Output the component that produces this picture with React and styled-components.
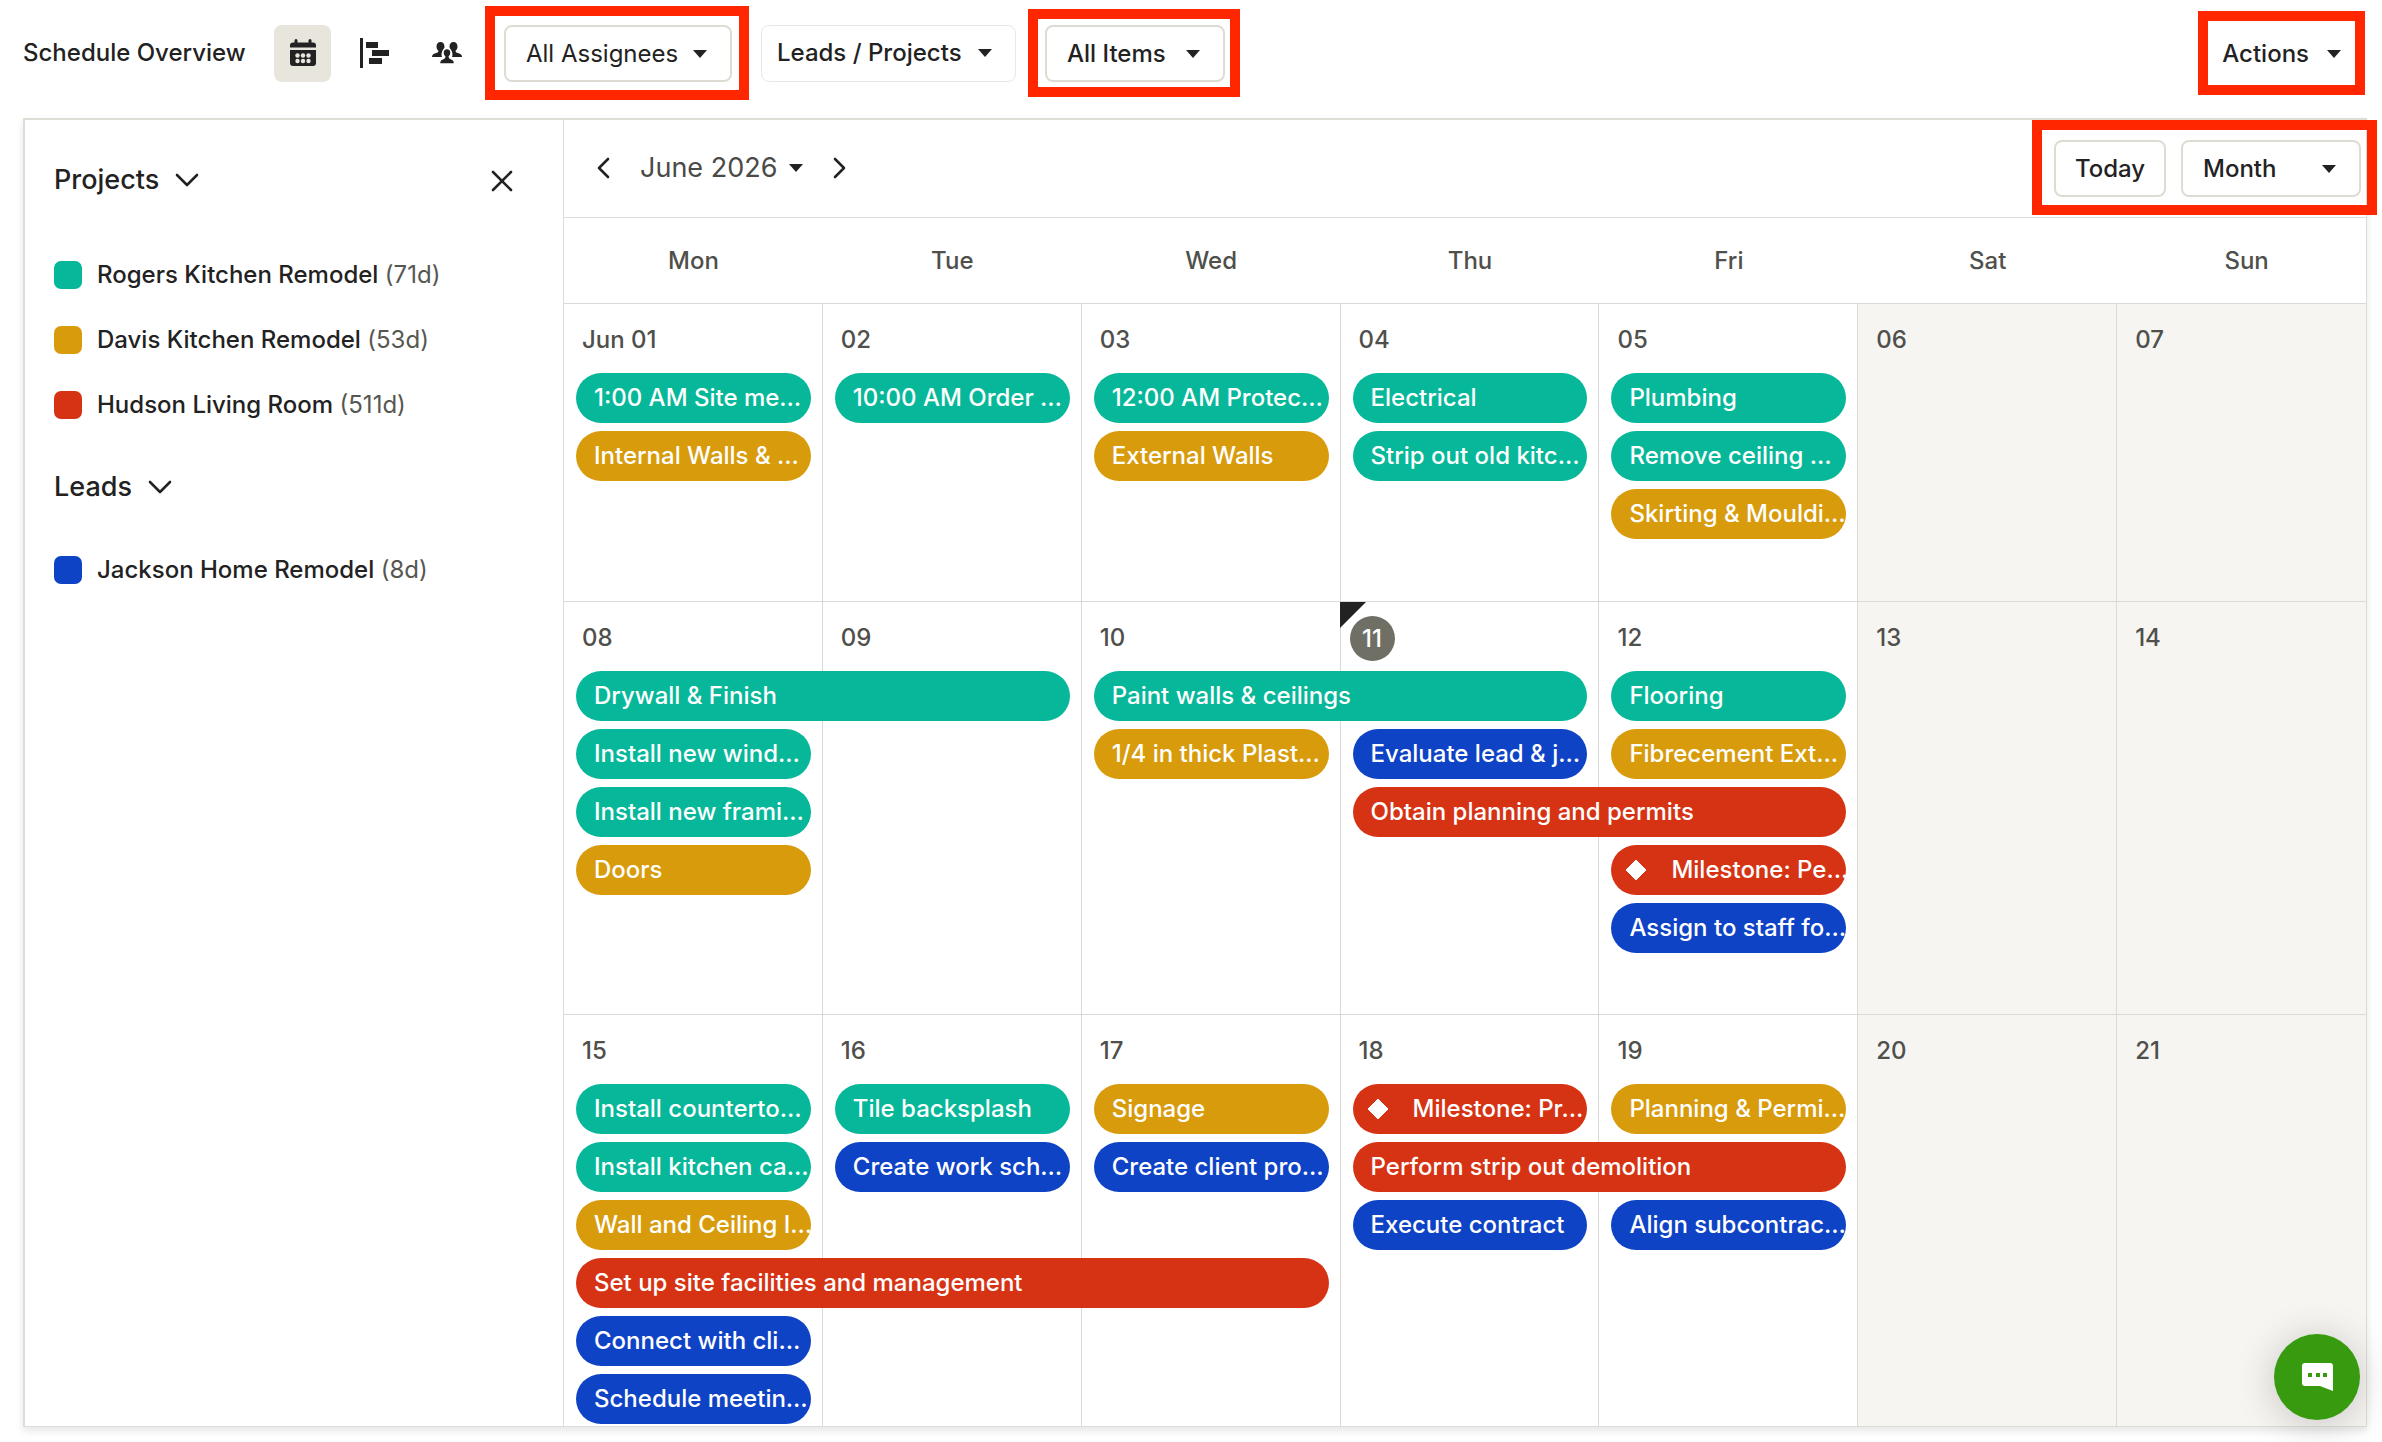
import React from "react";
import styled, { createGlobalStyle } from "styled-components";

const colors = {
  green: "#06b899",
  gold: "#d89b0c",
  red: "#d63315",
  blue: "#0f43c6",
};

const projects = [
  { name: "Rogers Kitchen Remodel", days: "71d", color: "green" },
  { name: "Davis Kitchen Remodel", days: "53d", color: "gold" },
  { name: "Hudson Living Room", days: "511d", color: "red" },
];

const leads = [{ name: "Jackson Home Remodel", days: "8d", color: "blue" }];

const weekDays = ["Mon", "Tue", "Wed", "Thu", "Fri", "Sat", "Sun"];

// each item: [title, color, first column, line, columns covered, milestone]
const weeks = [
  {
    height: 298,
    days: ["Jun 01", "02", "03", "04", "05", "06", "07"],
    items: [
      ["1:00 AM Site me…", "green", 1, 1],
      ["10:00 AM Order …", "green", 2, 1],
      ["12:00 AM Protec…", "green", 3, 1],
      ["Electrical", "green", 4, 1],
      ["Plumbing", "green", 5, 1],
      ["Internal Walls & …", "gold", 1, 2],
      ["External Walls", "gold", 3, 2],
      ["Strip out old kitc…", "green", 4, 2],
      ["Remove ceiling …", "green", 5, 2],
      ["Skirting & Mouldi…", "gold", 5, 3],
    ],
  },
  {
    height: 413,
    days: ["08", "09", "10", "11", "12", "13", "14"],
    today: "11",
    items: [
      ["Drywall & Finish", "green", 1, 1, 2],
      ["Paint walls & ceilings", "green", 3, 1, 2],
      ["Flooring", "green", 5, 1],
      ["Install new wind…", "green", 1, 2],
      ["1/4 in thick Plast…", "gold", 3, 2],
      ["Evaluate lead & j…", "blue", 4, 2],
      ["Fibrecement Ext…", "gold", 5, 2],
      ["Install new frami…", "green", 1, 3],
      ["Obtain planning and permits", "red", 4, 3, 2],
      ["Doors", "gold", 1, 4],
      ["Milestone: Pe…", "red", 5, 4, 1, true],
      ["Assign to staff fo…", "blue", 5, 5],
    ],
  },
  {
    height: 411,
    days: ["15", "16", "17", "18", "19", "20", "21"],
    items: [
      ["Install counterto…", "green", 1, 1],
      ["Tile backsplash", "green", 2, 1],
      ["Signage", "gold", 3, 1],
      ["Milestone: Pr…", "red", 4, 1, 1, true],
      ["Planning & Permi…", "gold", 5, 1],
      ["Install kitchen ca…", "green", 1, 2],
      ["Create work sch…", "blue", 2, 2],
      ["Create client pro…", "blue", 3, 2],
      ["Perform strip out demolition", "red", 4, 2, 2],
      ["Wall and Ceiling I…", "gold", 1, 3],
      ["Execute contract", "blue", 4, 3],
      ["Align subcontrac…", "blue", 5, 3],
      ["Set up site facilities and management", "red", 1, 4, 3],
      ["Connect with cli…", "blue", 1, 5],
      ["Schedule meetin…", "blue", 1, 6],
    ],
  },
];

function Caret() {
  return (
    <CaretSvg viewBox="0 0 14 8" aria-hidden="true">
      <path d="M0 0h14L7 8z" fill="currentColor" />
    </CaretSvg>
  );
}

function Chevron({ d, width, height }) {
  return (
    <svg width={width} height={height} viewBox={`0 0 ${width} ${height}`} fill="none" aria-hidden="true">
      <path d={d} stroke="currentColor" strokeWidth="2.6" strokeLinecap="round" strokeLinejoin="round" />
    </svg>
  );
}

function CalendarIcon() {
  return (
    <svg width="26" height="28" viewBox="0 0 26 28" aria-hidden="true">
      <path
        d="M4.500 1.500a1.500 1.500 0 0 1 3 0V3.500h11V1.500a1.500 1.500 0 0 1 3 0V3.500H23a3 3 0 0 1 3 3V8.500H0V6.500a3 3 0 0 1 3-3h1.500z"
        fill="#222"
      />
      <path d="M0 11h26V24a3 3 0 0 1-3 3H3a3 3 0 0 1-3-3z" fill="#222" />
      <g fill="#e8e6dc">
        {[7.5, 13, 18.5].map((x) => (
          <React.Fragment key={x}>
            <circle cx={x} cy="16.500" r="2.200" />
            <circle cx={x} cy="22" r="2.200" />
          </React.Fragment>
        ))}
      </g>
    </svg>
  );
}

function GanttIcon() {
  return (
    <svg width="30" height="30" viewBox="0 0 30 30" fill="#222" aria-hidden="true">
      <path d="M0 0h3v30H0zM6 4h12v6H6zM12 12h17v6H12zM9 20h13v6H9z" />
    </svg>
  );
}

function PeopleIcon() {
  return (
    <svg width="30" height="22" viewBox="0 0 30 22" fill="#222" aria-hidden="true">
      <path d="M8.500 0C11 0 12.500 2 12.500 4.500c0 1.800-.7 3.300-1.700 4.200-1.500 1.500-1.500 4.500-.8 6.300H0c0-2.500 1.500-3.200 3.500-3.800 2.500-.7 3-1.200 3-2.400C5.200 8 4.500 6.300 4.500 4.500 4.500 2 6 0 8.500 0z" />
      <path d="M21.500 0C19 0 17.500 2 17.500 4.500c0 1.800.7 3.300 1.700 4.200 1.500 1.500 1.500 4.500.8 6.300h10c0-2.500-1.500-3.200-3.500-3.800-2.500-.7-3-1.200-3-2.400 1.300-.8 2-2.500 2-4.300C25.500 2 24 0 21.500 0z" />
      <path
        d="M15 6.500c2.500 0 4 1.800 4 4.200 0 1.700-.7 3.100-1.800 4 0 1.300.5 1.800 2.600 2.500 2 .6 2.700 1.800 2.700 4.800h-15c0-3 .7-4.200 2.700-4.800 2.100-.7 2.600-1.200 2.600-2.500-1.100-.9-1.800-2.300-1.800-4 0-2.400 1.500-4.200 4-4.200z"
        stroke="#fff"
        strokeWidth="1.400"
      />
    </svg>
  );
}

function ChatIcon() {
  return (
    <svg width="31" height="28" viewBox="0 0 31 28" aria-hidden="true">
      <path d="M3 0h25a3 3 0 0 1 3 3v25l-13-5H3a3 3 0 0 1-3-3V3a3 3 0 0 1 3-3z" fill="#fff" />
      <path d="M6 10h4v4H6zM14 10h4v4h-4zM21 10h4v4h-4z" fill="#389b0f" />
    </svg>
  );
}

function Select({ label, value, width, thin, faint, inset }) {
  return (
    <SelectBox $width={width} $faint={faint}>
      <SelectInput aria-label={label} defaultValue={value} $thin={thin} $inset={inset}>
        <option value={value}>{value}</option>
      </SelectInput>
      <Caret />
    </SelectBox>
  );
}

function JobList({ title, jobs }) {
  return (
    <section>
      <GroupButton type="button">
        {title}
        <Chevron d="M2 2l10 10L22 2" width={24} height={14} />
      </GroupButton>
      <Jobs>
        {jobs.map((job) => (
          <Job key={job.name}>
            <Swatch $color={colors[job.color]} />
            <span>
              {job.name} <Count>({job.days})</Count>
            </span>
          </Job>
        ))}
      </Jobs>
    </section>
  );
}

function WeekRow({ week }) {
  return (
    <Week $height={week.height}>
      <Days>
        {week.days.map((day, i) => (
          <Day key={day} $off={i > 4}>
            {day === week.today ? (
              <>
                <Corner />
                <Today>{day}</Today>
              </>
            ) : (
              <DayNumber>{day}</DayNumber>
            )}
          </Day>
        ))}
      </Days>
      <Items>
        {week.items.map(([title, color, col, line, span = 1, milestone]) => (
          <Item key={title} type="button" $color={colors[color]} $col={col} $line={line} $span={span} $milestone={milestone}>
            {milestone && (
              <svg width="22" height="22" viewBox="0 0 22 22" aria-hidden="true">
                <path d="M11 1l10 10-10 10L1 11z" fill="#fff" stroke="#fff" strokeLinejoin="round" />
              </svg>
            )}
            <ItemText>{title}</ItemText>
          </Item>
        ))}
      </Items>
    </Week>
  );
}

export default function App() {
  return (
    <>
      <GlobalStyle />
      <TopBar>
        <Title>Schedule Overview</Title>
        <Views>
          <ViewButton type="button" aria-label="Calendar view" $active>
            <CalendarIcon />
          </ViewButton>
          <ViewButton type="button" aria-label="Gantt view">
            <GanttIcon />
          </ViewButton>
          <ViewButton type="button" aria-label="Team view">
            <PeopleIcon />
          </ViewButton>
        </Views>
        <Filters>
          <Highlight $pad="9px 7px 8px 9px">
            <Select label="Assignees" value="All Assignees" width={228} thin inset={20} />
          </Highlight>
          <Select label="Jobs" value="Leads / Projects" width={255} faint inset={15} />
          <Highlight $pad="6px 5px 5px 7px">
            <Select label="Items" value="All Items" width={180} inset={20} />
          </Highlight>
        </Filters>
        <Highlight $pad="4px 14px 3px 14px">
          <ActionsButton type="button">
            Actions
            <Caret />
          </ActionsButton>
        </Highlight>
      </TopBar>
      <Panel>
        <Sidebar>
          <CloseButton type="button" aria-label="Close list">
            <Chevron d="M2 2l18 18M20 2L2 20" width={22} height={22} />
          </CloseButton>
          <JobList title="Projects" jobs={projects} />
          <JobList title="Leads" jobs={leads} />
        </Sidebar>
        <Calendar>
          <CalendarBar>
            <MonthNav>
              <PlainButton type="button" aria-label="Previous month">
                <Chevron d="M12 2L3 11l9 9" width={14} height={22} />
              </PlainButton>
              <MonthButton type="button">
                June 2026
                <Caret />
              </MonthButton>
              <PlainButton type="button" aria-label="Next month">
                <Chevron d="M2 2l9 9-9 9" width={14} height={22} />
              </PlainButton>
            </MonthNav>
            <Highlight $pad="10px 6px 8px 12px">
              <TodayButton type="button">Today</TodayButton>
              <Select label="Range" value="Month" width={180} inset={20} />
            </Highlight>
          </CalendarBar>
          <Clip>
            <Grid>
              <WeekHead>
                {weekDays.map((name) => (
                  <span key={name}>{name}</span>
                ))}
              </WeekHead>
              {weeks.map((week) => (
                <WeekRow key={week.days[0]} week={week} />
              ))}
            </Grid>
          </Clip>
        </Calendar>
      </Panel>
      <ChatButton type="button" aria-label="Open chat">
        <ChatIcon />
      </ChatButton>
    </>
  );
}

const GlobalStyle = createGlobalStyle`
  * {
    box-sizing: border-box;
  }
  body {
    margin: 0;
    background: #fff;
    color: #222;
    font-family: Inter, "Liberation Sans", sans-serif;
    font-size: 24px;
    font-weight: 500;
    line-height: 32px;
  }
  button, select {
    font: inherit;
    color: inherit;
    background: none;
    border: 0;
    padding: 0;
    cursor: pointer;
  }
  svg {
    display: block;
    flex: none;
  }
`;

const TopBar = styled.header`
  display: flex;
  align-items: center;
  height: 118px;
  padding: 0 17px 12px 23px;
`;

const Title = styled.h1`
  width: 251px;
  margin: 0;
  font-size: 24px;
  font-weight: 500;
`;

const Views = styled.nav`
  display: flex;
  gap: 15px;
  margin-right: 10px;
`;

const ViewButton = styled.button`
  display: flex;
  align-items: center;
  justify-content: center;
  width: 57px;
  height: 57px;
  border-radius: 8px;
  background: ${(p) => (p.$active ? "#e8e6dc" : "none")};
`;

const Filters = styled.div`
  display: flex;
  align-items: center;
  gap: 12px;
  margin-right: auto;
`;

const Highlight = styled.div`
  display: flex;
  align-items: center;
  gap: 15px;
  padding: ${(p) => p.$pad};
  border: 10px solid #ff2600;
`;

const CaretSvg = styled.svg`
  width: 14px;
  height: 8px;
`;

const SelectBox = styled.div`
  display: grid;
  align-items: center;
  justify-items: end;
  width: ${(p) => p.$width}px;
  height: 57px;
  border: ${(p) => (p.$faint ? "1px solid #e8e8e6" : "2px solid #dedcd2")};
  border-radius: 8px;

  > * {
    grid-area: 1 / 1;
  }
  ${CaretSvg} {
    margin-right: 23px;
    pointer-events: none;
  }
`;

const SelectInput = styled.select`
  appearance: none;
  width: 100%;
  height: 100%;
  padding-left: ${(p) => p.$inset}px;
  font-weight: ${(p) => (p.$thin ? 400 : 500)};
`;

const ActionsButton = styled.button`
  display: flex;
  align-items: center;
  gap: 18px;
  height: 57px;
`;

const Panel = styled.main`
  display: flex;
  margin: 0 15px 15px 23px;
  border: 2px solid #deddd5;
  border-right-width: 1px;
  border-bottom-width: 1px;
  box-shadow: 0 4px 8px rgba(0, 0, 0, 0.1);
`;

const Sidebar = styled.aside`
  display: grid;
  grid-template-columns: 1fr auto;
  align-content: start;
  width: 539px;
  padding: 44px 50px 0 29px;
  border-right: 1px solid #deddda;

  section {
    grid-column: 1;
  }
`;

const PlainButton = styled.button`
  display: flex;
`;

const CloseButton = styled(PlainButton)`
  grid-column: 2;
  grid-row: 1;
  align-self: start;
  margin-top: 6px;
`;

const GroupButton = styled.button`
  display: flex;
  align-items: center;
  gap: 16px;
  font-size: 27px;
`;

const Jobs = styled.ul`
  display: flex;
  flex-direction: column;
  gap: 33px;
  margin: 0;
  padding: 63px 0 50px;
  list-style: none;

  section + section & {
    padding-top: 51px;
  }
`;

const Job = styled.li`
  display: flex;
  align-items: center;
  gap: 15px;
  white-space: nowrap;
`;

const Swatch = styled.span`
  width: 28px;
  height: 28px;
  border-radius: 7px;
  background: ${(p) => p.$color};
`;

const Count = styled.span`
  color: #575752;
  font-weight: 400;
`;

const Calendar = styled.section`
  flex: 1;
  min-width: 0;
`;

const CalendarBar = styled.div`
  display: flex;
  align-items: center;
  justify-content: space-between;
  height: 97px;
  margin-right: -11px;
  padding: 0 0 2px 32px;
`;

const MonthNav = styled.div`
  display: flex;
  align-items: center;
  gap: 30px;
`;

const MonthButton = styled.button`
  display: flex;
  align-items: center;
  gap: 12px;
  color: #4a4a46;
  font-size: 27px;
  font-weight: 400;

  ${CaretSvg} {
    color: #222;
  }
`;

const TodayButton = styled.button`
  width: 112px;
  height: 57px;
  border: 2px solid #dedcd2;
  border-radius: 8px;
`;

const Clip = styled.div`
  overflow: hidden;
`;

/* the last column runs a little past the panel edge */
const Grid = styled.div`
  margin-right: -10px;
  border-top: 1px solid #deddda;
`;

const WeekHead = styled.div`
  display: grid;
  grid-template-columns: repeat(7, 1fr);
  align-items: center;
  height: 86px;
  border-bottom: 1px solid #d9d9d7;
  color: #4f4f4b;
  text-align: center;
`;

const Week = styled.div`
  display: grid;
  min-height: ${(p) => p.$height}px;
  border-bottom: 1px solid #d9d9d7;

  > * {
    grid-area: 1 / 1;
  }
  &:last-child {
    border-bottom: 0;
  }
`;

const Days = styled.div`
  display: grid;
  grid-template-columns: repeat(7, 1fr);
`;

const Day = styled.div`
  position: relative;
  border-right: 1px solid #d9d9d7;
  background: ${(p) => (p.$off ? "#f6f5f2" : "none")};
`;

const DayNumber = styled.div`
  padding: 20px 18px 0;
  color: #4f4f4b;
`;

const Today = styled.div`
  width: 45px;
  margin: 14px 0 0 9px;
  border-radius: 50%;
  background: #706f65;
  color: #fff;
  line-height: 45px;
  text-align: center;
`;

const Corner = styled.span`
  position: absolute;
  top: 0;
  left: -1px;
  border: 13px solid #222;
  border-right-color: transparent;
  border-bottom-color: transparent;
`;

const Items = styled.div`
  position: relative;
  display: grid;
  grid-template-columns: repeat(7, 1fr);
  grid-auto-rows: 50px;
  row-gap: 8px;
  align-content: start;
  padding: 69px 0 2px;
`;

const Item = styled.button`
  display: flex;
  align-items: center;
  gap: ${(p) => (p.$milestone ? 24 : 0)}px;
  grid-column: ${(p) => p.$col} / span ${(p) => p.$span};
  grid-row: ${(p) => p.$line};
  min-width: 0;
  margin: 0 12px;
  padding-left: ${(p) => (p.$milestone ? 14 : 18)}px;
  border-radius: 25px;
  background: ${(p) => p.$color};
  color: #fff;
  text-align: left;
`;

const ItemText = styled.span`
  white-space: nowrap;
`;

const ChatButton = styled.button`
  position: fixed;
  right: 22px;
  bottom: 22px;
  display: flex;
  align-items: center;
  justify-content: center;
  width: 86px;
  height: 86px;
  border-radius: 50%;
  background: #389b0f;
  box-shadow: 0 4px 40px rgba(0, 0, 0, 0.2);
`;
